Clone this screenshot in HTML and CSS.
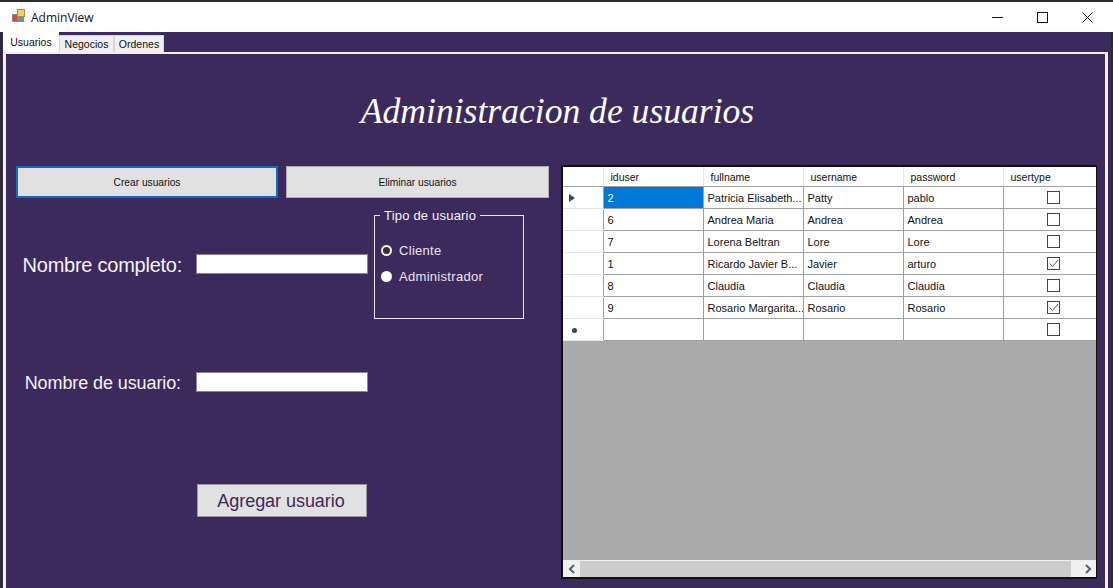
FILE: index.html
```html
<!DOCTYPE html>
<html lang="es">
<head>
    <meta charset="UTF-8">
    <meta name="viewport" content="width=device-width, initial-scale=1.0">
    <title>AdminView</title>
    <link rel="stylesheet" href="styles.css">
</head>
<body>
    <div class="titlebar">
        <svg class="app-icon" width="16" height="16" viewBox="0 0 16 16">
            <rect x="2.5" y="5.5" width="5" height="7" fill="#d8463c" stroke="#8a8a8a"/>
            <rect x="7.5" y="0.5" width="7" height="7" fill="#f5d35a" stroke="#a89040"/>
            <rect x="8.5" y="8.5" width="5" height="4" fill="#5a8fd8" stroke="#8a8a8a"/>
        </svg>
        <span class="app-name">AdminView</span>
        <div class="caption">
            <svg width="11" height="11" viewBox="0 0 11 11"><path d="M0 5.5H11" stroke="#111" fill="none"/></svg>
            <svg width="11" height="11" viewBox="0 0 11 11"><rect x="0.5" y="0.5" width="10" height="10" stroke="#111" fill="none"/></svg>
            <svg width="11" height="11" viewBox="0 0 11 11"><path d="M0.5 0.5L10.5 10.5M10.5 0.5L0.5 10.5" stroke="#111" fill="none"/></svg>
        </div>
    </div>

    <div class="workarea">
        <div class="tabs">
            <div class="tab active">Usuarios</div>
            <div class="tab">Negocios</div>
            <div class="tab last">Ordenes</div>
        </div>

        <div class="tabpage">
            <h1 class="page-title">Administracion de usuarios</h1>

            <div class="columns">
                <div class="left">
                    <div class="actions">
                        <button class="btn focused">Crear usuarios</button>
                        <button class="btn">Eliminar usuarios</button>
                    </div>

                    <div class="form-top">
                        <div class="field field-name">
                            <label class="label-big">Nombre completo:</label>
                            <input class="text-input" type="text">
                        </div>
                        <fieldset class="group">
                            <legend>Tipo de usuario</legend>
                            <label class="radio"><input type="radio" name="tipo" checked> Cliente</label>
                            <label class="radio"><input type="radio" name="tipo"> Administrador</label>
                        </fieldset>
                    </div>

                    <div class="field field-user">
                        <label class="label-mid">Nombre de usuario:</label>
                        <input class="text-input" type="text">
                    </div>

                    <button class="btn-add">Agregar usuario</button>
                </div>

                <div class="grid">
                    <table>
                        <thead>
                            <tr><th class="rowhead"></th><th>iduser</th><th>fullname</th><th>username</th><th>password</th><th>usertype</th></tr>
                        </thead>
                        <tbody>
                            <tr>
                                <td class="rowhead"><span class="arrow"></span></td>
                                <td class="selected">2</td><td>Patricia Elisabeth...</td><td>Patty</td><td>pablo</td>
                                <td class="cb"><span class="check"></span></td>
                            </tr>
                            <tr>
                                <td class="rowhead"></td>
                                <td>6</td><td>Andrea Maria</td><td>Andrea</td><td>Andrea</td>
                                <td class="cb"><span class="check"></span></td>
                            </tr>
                            <tr>
                                <td class="rowhead"></td>
                                <td>7</td><td>Lorena Beltran</td><td>Lore</td><td>Lore</td>
                                <td class="cb"><span class="check"></span></td>
                            </tr>
                            <tr>
                                <td class="rowhead"></td>
                                <td>1</td><td>Ricardo Javier B...</td><td>Javier</td><td>arturo</td>
                                <td class="cb"><span class="check"><svg width="11" height="11" viewBox="0 0 11 11"><path d="M1.5 5.5L4.5 8.5L10 2" stroke="#555" fill="none"/></svg></span></td>
                            </tr>
                            <tr>
                                <td class="rowhead"></td>
                                <td>8</td><td>Claudia</td><td>Claudia</td><td>Claudia</td>
                                <td class="cb"><span class="check"></span></td>
                            </tr>
                            <tr>
                                <td class="rowhead"></td>
                                <td>9</td><td>Rosario Margarita...</td><td>Rosario</td><td>Rosario</td>
                                <td class="cb"><span class="check"><svg width="11" height="11" viewBox="0 0 11 11"><path d="M1.5 5.5L4.5 8.5L10 2" stroke="#555" fill="none"/></svg></span></td>
                            </tr>
                            <tr>
                                <td class="rowhead"><span class="star"></span></td>
                                <td></td><td></td><td></td><td></td>
                                <td class="cb"><span class="check"></span></td>
                            </tr>
                        </tbody>
                    </table>
                    <div class="grid-empty"></div>
                    <div class="hscroll">
                        <div class="scroll-btn"><svg width="8" height="10" viewBox="0 0 8 10"><path d="M6 1L2 5L6 9" stroke="#606060" stroke-width="2" fill="none"/></svg></div>
                        <div class="scroll-thumb"></div>
                        <div class="scroll-btn"><svg width="8" height="10" viewBox="0 0 8 10"><path d="M2 1L6 5L2 9" stroke="#606060" stroke-width="2" fill="none"/></svg></div>
                    </div>
                </div>
            </div>
        </div>
    </div>
</body>
</html>
```

FILE: styles.css
```css
* {
    box-sizing: border-box;
}
html, body {
    height: 100%;
}
body {
    margin: 0;
    overflow: hidden;
    display: flex;
    flex-direction: column;
    padding-top: 2px;
    background: #2b2b2b;
    font-family: "Liberation Sans", Arial, sans-serif;
}

/* title bar */
.titlebar {
    height: 30px;
    flex: none;
    display: flex;
    align-items: center;
    padding-left: 10px;
    background: #fff;
}
.app-icon {
    margin-right: 5px;
}
.app-name {
    font-family: "Open Sans", sans-serif;
    font-size: 12px;
    color: #111;
}
.caption {
    margin-left: auto;
    display: flex;
    gap: 34px;
    padding-right: 20px;
}

/* tabs */
.workarea {
    flex: 1;
    display: flex;
    flex-direction: column;
    min-height: 0;
    margin-left: 2px;
    margin-right: 2px;
    padding-left: 1px;
    padding-right: 1px;
    background: #3d2a5c;
}
.tabs {
    height: 20px;
    flex: none;
    display: flex;
    align-items: flex-end;
    padding-top: 1px;
    position: relative;
    z-index: 1;
}
.tab {
    width: 55px;
    height: 17px;
    font-size: 10.5px;
    line-height: 17px;
    text-align: center;
    color: #111;
    background: #f0f0f0;
    border: 1px solid #d5d5d5;
    border-bottom: none;
}
.tab.last {
    width: 50px;
}
.tab.active {
    height: 20px;
    width: 56px;
    line-height: 20px;
    background: #fff;
    border: none;
}
.tabpage {
    flex: 1;
    display: flex;
    flex-direction: column;
    min-height: 0;
    margin-right: 2px;
    border: 3px solid #f2f0f5;
    border-top-width: 2px;
    border-bottom: none;
    background: #3d2a5c;
}
.page-title {
    margin: 33px 0 0;
    padding-left: 4px;
    height: 48px;
    text-align: center;
    font-family: "Liberation Serif", serif;
    font-style: italic;
    font-weight: normal;
    font-size: 35.6px;
    line-height: 48px;
    color: #fff;
}

.columns {
    display: flex;
    margin-top: 30px;
    padding-left: 10px;
}

/* left side */
.left {
    width: 533px;
    flex: none;
    margin-top: 1px;
}
.actions {
    display: flex;
    gap: 8px;
}
.btn {
    width: 262px;
    height: 32px;
    padding: 0;
    font-family: inherit;
    font-size: 10.2px;
    color: #111;
    background: #e1e1e1;
    border: 1px solid #adadad;
}
.btn + .btn {
    width: 263px;
}
.btn.focused {
    border: 2px solid #0f6cc4;
}
.form-top {
    display: flex;
    align-items: flex-start;
    height: 160px;
    margin-top: 10px;
}
.field {
    display: grid;
    grid-template-columns: 166px 172px;
    column-gap: 14px;
    align-items: center;
}
.field-name {
    margin-top: 42px;
}
.field-user {
    margin-top: 1px;
}
.label-big {
    padding-top: 4px;
    font-size: 20px;
    letter-spacing: -0.25px;
    color: #f4f2f7;
    text-align: right;
}
.label-mid {
    padding-top: 4px;
    padding-right: 1px;
    font-size: 18px;
    letter-spacing: -0.1px;
    color: #f4f2f7;
    text-align: right;
}
.text-input {
    width: 172px;
    height: 20px;
    padding: 0;
    background: #fff;
    border: 1px solid #8b8299;
    border-radius: 0;
}
.group {
    width: 150px;
    height: 111px;
    min-width: 0;
    margin: 0 0 0 6px;
    padding: 14px 0 0 6px;
    border: 1px solid #e8e6ec;
}
.group legend {
    padding: 0 4px;
    margin-left: -1px;
    font-size: 13px;
    letter-spacing: 0.2px;
    color: #f4f2f7;
}
.radio {
    display: flex;
    align-items: center;
    gap: 7px;
    height: 26px;
    font-size: 13px;
    letter-spacing: 0.3px;
    color: #e8e6ec;
}
.radio input {
    appearance: none;
    width: 11px;
    height: 11px;
    margin: 0;
    border-radius: 50%;
    background: #fff;
}
.radio input:checked {
    background: #333;
    border: 2.5px solid #fff8e0;
}
.btn-add {
    display: block;
    width: 170px;
    height: 33px;
    margin: 90px 0 0 181px;
    padding: 2px 2px 0 0;
    font-family: inherit;
    font-size: 18px;
    letter-spacing: -0.05px;
    color: #3d2a5c;
    background: #e1e1e1;
    border: 1px solid #9a94a5;
}

/* data grid */
.grid {
    width: 536px;
    height: 414px;
    margin-left: 12px;
    display: flex;
    flex-direction: column;
    background: #ababab;
    border: 2px solid #111;
    border-right-width: 1px;
}
.grid table {
    width: 533px;
    table-layout: fixed;
    border-collapse: collapse;
    flex: none;
    font-size: 11px;
    color: #111;
    background: #fff;
}
.grid th {
    width: 100px;
    height: 19px;
    padding: 1px 0 0 7px;
    font-size: 10.5px;
    font-weight: normal;
    text-align: left;
    border-right: 1px solid #e4e4e4;
    border-bottom: 1px solid #a0a0a0;
}
.grid th:last-child {
    width: 93px;
    border-right: none;
}
.grid th.rowhead {
    width: 40px;
}
.grid td {
    height: 22px;
    padding: 1px 0 0 4px;
    white-space: nowrap;
    overflow: hidden;
    border-right: 1px solid #a0a0a0;
    border-bottom: 1px solid #a0a0a0;
}
.grid td:last-child {
    border-right: none;
}
.grid td.rowhead {
    position: relative;
    border-right: 1px solid #a0a0a0;
    border-bottom: 1px solid #e4e4e4;
}
.grid td.selected {
    color: #fff;
    background: #0078d7;
}
.grid td.cb {
    padding: 0 0 0 8px;
    text-align: center;
}
.arrow {
    position: absolute;
    left: 6px;
    top: 7px;
    border-left: 6px solid #444;
    border-top: 4.5px solid transparent;
    border-bottom: 4.5px solid transparent;
}
.star {
    position: absolute;
    left: 9px;
    top: 9px;
    width: 5px;
    height: 5px;
    border-radius: 50%;
    background: #444;
}
.check {
    display: inline-flex;
    align-items: center;
    justify-content: center;
    width: 13px;
    height: 13px;
    vertical-align: middle;
    background: #fff;
    border: 1px solid #444;
}
.grid-empty {
    flex: 1;
}
.hscroll {
    height: 17px;
    flex: none;
    display: flex;
    border-top: 1px solid #f0f0f0;
    background: #f0f0f0;
}
.scroll-btn {
    width: 17px;
    display: flex;
    align-items: center;
    justify-content: center;
}
.scroll-thumb {
    flex: 1;
    margin-right: 8px;
    background: #cdcdcd;
}
```
